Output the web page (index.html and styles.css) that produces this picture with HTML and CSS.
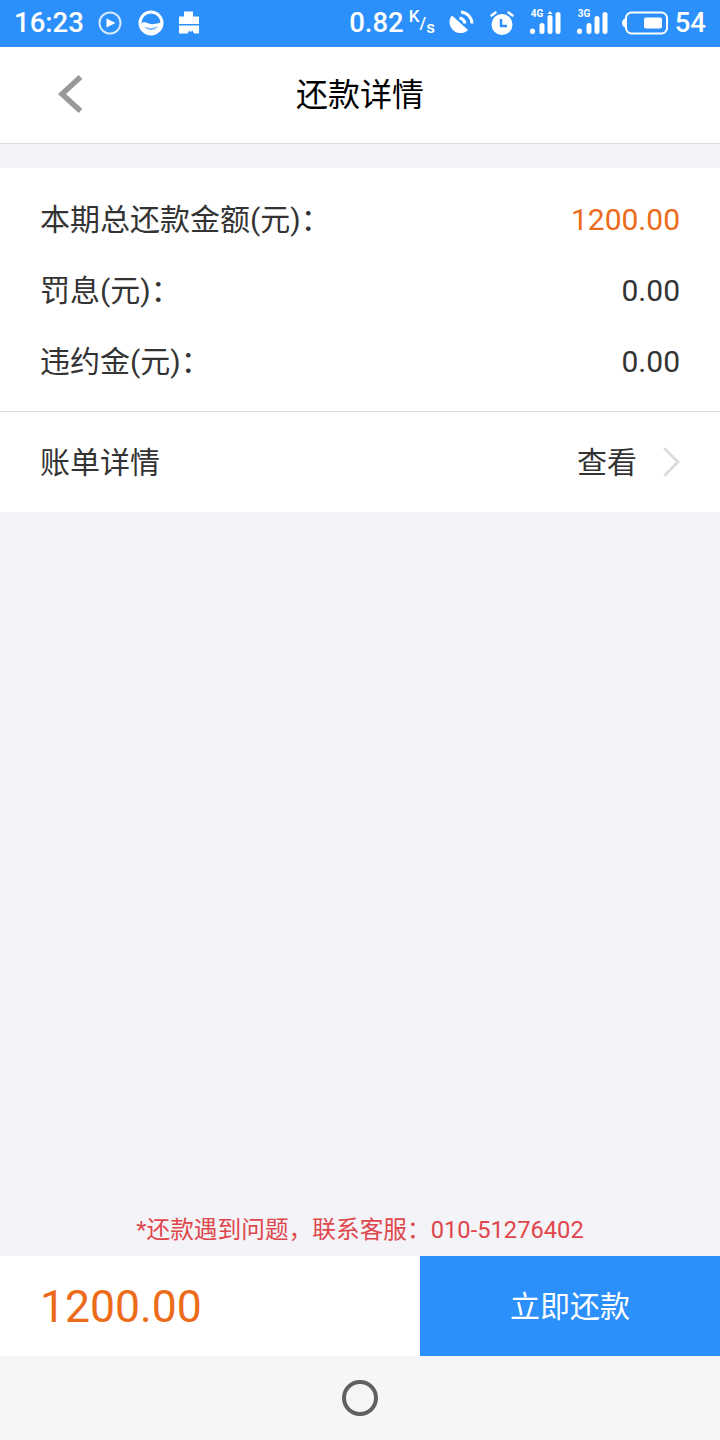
FILE: index.html
```html
<!DOCTYPE html>
<html>
<head>
  <meta charset="UTF-8">
  <title>还款详情</title>
  <link rel="stylesheet" href="styles.css">
</head>
<body>
  <div class="status">
    <div class="status-group">
      <span class="clock">16:23</span>
      <svg class="ic ic-play" width="26" height="26" viewBox="0 0 26 26"><circle cx="13" cy="13" r="10.5" fill="none" stroke="#fff" stroke-width="2" opacity=".8"/><path d="M9.5 8.5l9 4.5-9 4.5z" fill="#fff"/></svg>
      <svg class="ic ic-qq" width="26" height="26" viewBox="0 0 26 26"><path d="M3 13.500c3-2.500 6-1 8 0s5 1 12-1c0 7-4 10.500-10 10.500S3 19 3 13.500z" fill="#fff"/><path d="M6 16.500c4 2 10 2 14-.5-2 3-4 4-7 4s-5-1-7-3.500z" fill="#7dbbfd"/><circle cx="13" cy="13" r="11" fill="none" stroke="#fff" stroke-width="3"/></svg>
      <svg class="ic ic-bag" width="22" height="24" viewBox="0 0 22 24"><path d="M6 .5h9v5h6V13H1V5.500h5zM1 14.500h20v8h-5l-1.500-3-2 1.500-1-1.500-2 3H1z" fill="#fff"/></svg>
    </div>
    <div class="status-group">
      <span class="speed">0.82</span>
      <span class="unit"><sup>K</sup>/<sub>s</sub></span>
      <svg class="ic ic-dish" width="28" height="28" viewBox="0 0 28 28"><path d="M5 6.500l16 14.500c-3 3.500-10 4.500-14.500.5S1 11 5 6.500z" fill="#fff"/><path d="M12.500 9c3 .5 5 2.500 5.500 5.500" fill="none" stroke="#fff" stroke-width="3"/><path d="M14 3c6 .5 10.500 5 11 11.500" fill="none" stroke="#fff" stroke-width="3"/></svg>
      <svg class="ic ic-alarm" width="28" height="28" viewBox="0 0 28 28"><circle cx="14" cy="15.500" r="10.500" fill="#fff"/><path d="M13 10v7h6" fill="none" stroke="#2b90fb" stroke-width="2.500"/><path d="M3.500 6.500l4-3M24.500 6.500l-4-3" stroke="#fff" stroke-width="2.500" stroke-linecap="round"/></svg>
      <span class="signal">
        <span class="net">4G</span>
        <svg width="31" height="24" viewBox="0 0 31 24"><g fill="#fff"><rect x="0" y="17.500" width="5" height="5.500" rx="2.500"/><rect x="9.500" y="12" width="5" height="11" rx="2.500"/><rect x="17.500" y="4" width="5" height="19" rx="2.500"/><path d="M20 0l2.500 3h-5z"/><rect x="25.500" y="1" width="5" height="22" rx="2.500"/></g></svg>
      </span>
      <span class="signal">
        <span class="net">3G</span>
        <svg width="31" height="24" viewBox="0 0 31 24"><g fill="#fff"><rect x="0" y="17.500" width="5" height="5.500" rx="2.500"/><rect x="9.500" y="12" width="5" height="11" rx="2.500"/><rect x="17.500" y="5" width="5" height="18" rx="2.500"/><rect x="25.500" y="1" width="5" height="22" rx="2.500"/></g></svg>
      </span>
      <svg class="ic ic-batt" width="46" height="24" viewBox="0 0 46 24"><rect x="4" y="1.500" width="41" height="21" rx="5.500" fill="none" stroke="#fff" stroke-width="2"/><rect x="22" y="6.500" width="18" height="11" rx="2" fill="#fff"/><path d="M3 7.500v9C1 16 0 14 0 12s1-4 3-4.500z" fill="#fff"/></svg>
      <span class="level">54</span>
    </div>
  </div>

  <div class="topbar">
    <svg class="back" width="28" height="40" viewBox="0 0 28 40"><path d="M24.500 3L6 20l18.500 17" fill="none" stroke="#999" stroke-width="5.500"/></svg>
    <h1>还款详情</h1>
  </div>

  <div class="card">
    <div class="rows">
      <div class="row"><span class="label">本期总还款金额(元)：</span><span class="num orange">1200.00</span></div>
      <div class="row"><span class="label">罚息(元)：</span><span class="num">0.00</span></div>
      <div class="row"><span class="label">违约金(元)：</span><span class="num">0.00</span></div>
    </div>
    <div class="bill">
      <span class="label">账单详情</span>
      <span class="bill-link"><span class="label">查看</span>
        <svg width="18" height="32" viewBox="0 0 18 32"><path d="M3 3l13 13L3 29" fill="none" stroke="#ddd" stroke-width="3" stroke-linecap="round"/></svg>
      </span>
    </div>
  </div>

  <div class="spacer"></div>

  <p class="notice">*还款遇到问题，联系客服：010-51276402</p>

  <div class="paybar">
    <div class="amount">1200.00</div>
    <div class="paybtn">立即还款</div>
  </div>

  <div class="navbar"><span class="home"></span></div>
</body>
</html>
```

FILE: styles.css
```css
html, body {
  height: 100%;
}
body {
  margin: 0;
  height: 1440px;
  display: flex;
  flex-direction: column;
  background: #f3f3f8;
  color: #333;
  font-family: Roboto, "Noto Sans CJK SC", sans-serif;
  overflow: hidden;
}
.status {
  height: 47px;
  flex: none;
  background: #2b90fb;
  color: #fff;
  display: flex;
  justify-content: space-between;
  align-items: center;
  padding: 0 14px 2px 14px;
  box-sizing: border-box;
}
.status-group {
  display: flex;
  align-items: center;
}
.clock {
  font-size: 27.5px;
  font-weight: 500;
  width: 84px;
}
.ic-play {
  margin-left: -1px;
}
.ic-qq {
  margin-left: 15px;
}
.ic-bag {
  margin-left: 14px;
}
.speed {
  font-size: 27.5px;
  font-weight: 500;
}
.unit {
  font-size: 17px;
  font-weight: 500;
  width: 38px;
  margin-left: 5px;
}
.unit sup, .unit sub {
  font-size: 17px;
  line-height: 0;
}
.ic-alarm {
  margin-left: 13px;
}
.signal {
  position: relative;
  display: flex;
  margin-left: 14px;
}
.signal + .signal {
  margin-left: 16px;
}
.signal svg {
  display: block;
}
.net {
  position: absolute;
  left: 1px;
  top: -3px;
  font-size: 10px;
  font-weight: 700;
}
.ic-batt {
  margin-left: 14px;
}
.level {
  font-size: 27.5px;
  font-weight: 500;
  margin-left: 7px;
}
.topbar {
  height: 96px;
  flex: none;
  background: #fff;
  border-bottom: 1px solid #ddd;
  display: flex;
  align-items: center;
  justify-content: center;
  position: relative;
}
.back {
  position: absolute;
  left: 56px;
  top: 27px;
}
h1 {
  margin: 0 0 6px;
  font-size: 32px;
  font-weight: 400;
  color: #000;
}
.card {
  flex: none;
  margin-top: 24px;
  background: #fff;
}
.rows {
  padding: 16px 40px 14px;
  border-bottom: 1px solid #ddd;
}
.row {
  height: 71px;
  display: flex;
  justify-content: space-between;
  align-items: center;
  font-size: 30px;
}
.row .label {
  margin-bottom: 5px;
}
.num {
  font-size: 30px;
}
.orange {
  color: #ec6b1b;
}
.bill {
  height: 100px;
  padding: 0 40px;
  display: flex;
  justify-content: space-between;
  align-items: center;
  font-size: 30px;
}
.bill .label {
  margin-bottom: 4px;
}
.bill-link {
  display: flex;
  align-items: center;
  gap: 25px;
}
.spacer {
  flex: 1;
}
.notice {
  margin: 0 0 8px;
  text-align: center;
  font-size: 23.7px;
  line-height: 36px;
  color: #e0474c;
}
.paybar {
  height: 100px;
  flex: none;
  display: flex;
  background: #fff;
}
.amount {
  width: 420px;
  padding: 2px 0 0 40px;
  box-sizing: border-box;
  display: flex;
  align-items: center;
  font-size: 44.5px;
  color: #ec6b1b;
}
.paybtn {
  flex: 1;
  background: #2b90fb;
  color: #fff;
  font-size: 30px;
  padding-bottom: 4px;
  display: flex;
  align-items: center;
  justify-content: center;
}
.navbar {
  height: 84px;
  flex: none;
  background: #f6f6f8;
  display: flex;
  align-items: center;
  justify-content: center;
}
.home {
  width: 36px;
  height: 36px;
  box-sizing: border-box;
  border: 4px solid #606060;
  border-radius: 50%;
}
```
